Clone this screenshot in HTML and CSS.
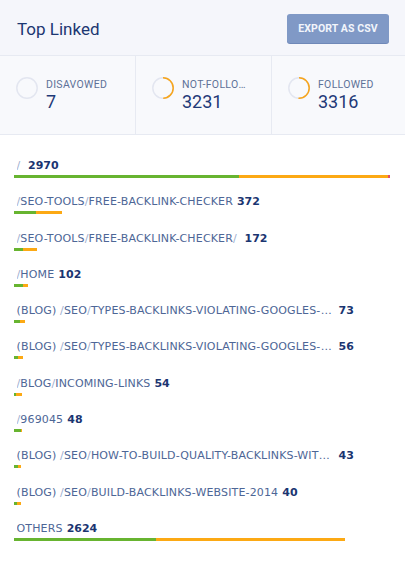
FILE: index.html
```html
<!DOCTYPE html>
<html>
<head>
<meta charset="utf-8">
<link rel="stylesheet" href="styles.css">
</head>
<body>
<div class="card">
  <header class="head">
    <h1 class="title">Top Linked</h1>
    <button class="btn">EXPORT AS CSV</button>
  </header>
  <section class="stats">
    <div class="stat">
      <svg class="ring" width="22" height="22" viewBox="0 0 22 22"><circle cx="11" cy="11" r="10.2" class="track"/></svg>
      <div class="stat-text"><div class="stat-label">DISAVOWED</div><div class="stat-value">7</div></div>
    </div>
    <div class="stat">
      <svg class="ring" width="22" height="22" viewBox="0 0 22 22"><circle cx="11" cy="11" r="10.2" class="track"/><circle cx="11" cy="11" r="10.2" class="arc" stroke-dasharray="31.6 64.1" transform="rotate(-90 11 11)"/></svg>
      <div class="stat-text"><div class="stat-label">NOT-FOLLOWED</div><div class="stat-value">3231</div></div>
    </div>
    <div class="stat">
      <svg class="ring" width="22" height="22" viewBox="0 0 22 22"><circle cx="11" cy="11" r="10.2" class="track"/><circle cx="11" cy="11" r="10.2" class="arc" stroke-dasharray="32.4 64.1" transform="rotate(-90 11 11)"/></svg>
      <div class="stat-text"><div class="stat-label">FOLLOWED</div><div class="stat-value">3316</div></div>
    </div>
  </section>
  <ul class="list">
    <li class="row">
      <div class="line"><span class="label"><span class="sl">/</span> </span><span class="count">2970</span></div>
      <div class="bar"><span class="g" style="width:225px"></span><span class="o" style="width:149px"></span><span class="r" style="width:2px"></span></div>
    </li>
    <li class="row">
      <div class="line"><span class="label"><span class="sl">/</span>SEO-TOOLS<span class="sl">/</span>FREE-BACKLINK-CHECKER</span><span class="count">372</span></div>
      <div class="bar"><span class="g" style="width:22px"></span><span class="o" style="width:26px"></span></div>
    </li>
    <li class="row">
      <div class="line"><span class="label"><span class="sl">/</span>SEO-TOOLS<span class="sl">/</span>FREE-BACKLINK-CHECKER<span class="sl">/</span> </span><span class="count">172</span></div>
      <div class="bar"><span class="g" style="width:9px"></span><span class="o" style="width:14px"></span></div>
    </li>
    <li class="row">
      <div class="line"><span class="label"><span class="sl">/</span>HOME</span><span class="count">102</span></div>
      <div class="bar"><span class="g" style="width:9px"></span><span class="o" style="width:5px"></span></div>
    </li>
    <li class="row">
      <div class="line"><span class="label">(BLOG) <span class="sl">/</span>SEO<span class="sl">/</span>TYPES-BACKLINKS-VIOLATING-GOOGLES-GUIDELINES</span><span class="count">73</span></div>
      <div class="bar"><span class="g" style="width:6px"></span><span class="o" style="width:5px"></span></div>
    </li>
    <li class="row">
      <div class="line"><span class="label">(BLOG) <span class="sl">/</span>SEO<span class="sl">/</span>TYPES-BACKLINKS-VIOLATING-GOOGLES-GUIDELINES-2</span><span class="count">56</span></div>
      <div class="bar"><span class="g" style="width:4px"></span><span class="o" style="width:5px"></span></div>
    </li>
    <li class="row">
      <div class="line"><span class="label"><span class="sl">/</span>BLOG<span class="sl">/</span>INCOMING-LINKS</span><span class="count">54</span></div>
      <div class="bar"><span class="g" style="width:2px"></span><span class="o" style="width:6px"></span></div>
    </li>
    <li class="row">
      <div class="line"><span class="label"><span class="sl">/</span>969045</span><span class="count">48</span></div>
      <div class="bar"><span class="g" style="width:7px"></span><span class="o" style="width:1px"></span></div>
    </li>
    <li class="row">
      <div class="line"><span class="label">(BLOG) <span class="sl">/</span>SEO<span class="sl">/</span>HOW-TO-BUILD-QUALITY-BACKLINKS-WITHOUT-PENALTIES</span><span class="count">43</span></div>
      <div class="bar"><span class="g" style="width:4px"></span><span class="o" style="width:3px"></span></div>
    </li>
    <li class="row">
      <div class="line"><span class="label">(BLOG) <span class="sl">/</span>SEO<span class="sl">/</span>BUILD-BACKLINKS-WEBSITE-2014</span><span class="count">40</span></div>
      <div class="bar"><span class="g" style="width:3px"></span><span class="o" style="width:4px"></span></div>
    </li>
    <li class="row">
      <div class="line"><span class="label">OTHERS</span><span class="count">2624</span></div>
      <div class="bar"><span class="g" style="width:142px"></span><span class="o" style="width:189px"></span></div>
    </li>
  </ul>
</div>
</body>
</html>
```
FILE: styles.css
```css
* { box-sizing: border-box; }
html, body { margin: 0; padding: 0; background: #ffffff; }
body { width: 405px; height: 570px; overflow: hidden; font-family: Roboto, "Liberation Sans", sans-serif; }

.card { width: 405px; }

.head {
  height: 56px;
  display: flex;
  align-items: center;
  justify-content: space-between;
  padding: 0 16px 0 17px;
  background: #f5f6fb;
  border-bottom: 1px solid #e7eaf2;
}
.title {
  margin: 0;
  font-family: Roboto, sans-serif;
  font-weight: 400;
  font-size: 17px;
  color: #1c3672;
  position: relative;
  top: 1px;
}
.btn {
  width: 102px;
  height: 29px;
  margin-top: 1px;
  padding: 0;
  border: none;
  border-radius: 3px;
  background: #8099c6;
  box-shadow: 0 1px 0 #6f88b8;
  color: #f2f5fb;
  font-family: Roboto, sans-serif;
  font-weight: 700;
  font-size: 10.5px;
  letter-spacing: 0.1px;
}

.stats {
  display: grid;
  grid-template-columns: 135px 136px 134px;
  background: #f8f9fc;
  border-bottom: 1px solid #e7eaf2;
}
.stat {
  display: flex;
  align-items: flex-start;
  gap: 8px;
  padding: 21px 16px 21px 16px;
}
.stat + .stat { border-left: 1px solid #e7eaf2; }
.ring { flex: none; display: block; }
.ring circle { fill: none; stroke-width: 1.5; }
.ring .track { stroke: #e3e6f0; }
.ring .arc { stroke: #f7a51c; }
.stat-text { margin-top: 2px; min-width: 0; }
.stat-label {
  font-size: 10.5px;
  line-height: 12px;
  letter-spacing: 0.3px;
  color: #5e7198;
  white-space: nowrap;
  overflow: hidden;
  text-overflow: ellipsis;
  max-width: 68px;
}
.stat-value {
  font-size: 18px;
  line-height: 22px;
  color: #1f3a78;
}

.list {
  list-style: none;
  margin: 0;
  padding: 24px 0 0 14px;
  display: flex;
  flex-direction: column;
  gap: 17.3px;
}
.row { display: block; }
.line {
  height: 14px;
  line-height: 14px;
  display: flex;
  align-items: baseline;
  white-space: nowrap;
  padding-left: 2.5px;
}
.label {
  font-family: "DejaVu Sans", Verdana, sans-serif;
  font-size: 11px;
  letter-spacing: 0.15px;
  color: #4d6696;
  max-width: 318px;
  overflow: hidden;
  text-overflow: ellipsis;
  white-space: pre;
}
.sl { color: #9eafcf; }
.count {
  margin-left: 4px;
  font-family: "DejaVu Sans", Verdana, sans-serif;
  font-weight: 700;
  font-size: 11px;
  color: #1b3571;
}
.bar {
  display: flex;
  height: 3px;
  margin-top: 2px;
}
.bar span { display: block; height: 3px; flex: none; }
.bar .g { background: #67b430; }
.bar .o { background: #fca914; }
.bar .r { background: #df4e6d; }
```
